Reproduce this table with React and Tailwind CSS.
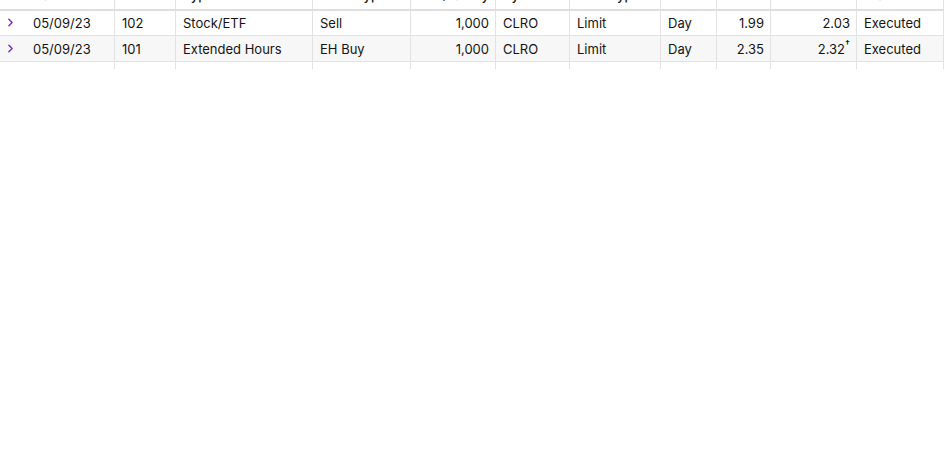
import { ChevronRight } from 'lucide-react';

const cols = 'grid grid-cols-[26px_89px_61px_137px_98px_85px_74px_91px_56px_54px_86px_87px]';

const headers = [
  { label: '', align: 'left' },
  { label: 'Date', align: 'left' },
  { label: 'Order', align: 'left' },
  { label: 'Type', align: 'left' },
  { label: 'Order type', align: 'left' },
  { label: 'Quantity', align: 'right' },
  { label: 'Symbol', align: 'left' },
  { label: 'Price type', align: 'left' },
  { label: 'Term', align: 'left' },
  { label: 'Price', align: 'right' },
  { label: 'Executed', align: 'right' },
  { label: 'Status', align: 'left' },
];

const orders = [
  { date: '05/09/23', order: '102', type: 'Stock/ETF', orderType: 'Sell', qty: '1,000', symbol: 'CLRO', priceType: 'Limit', term: 'Day', price: '1.99', executed: '2.03', dagger: false, status: 'Executed' },
  { date: '05/09/23', order: '101', type: 'Extended Hours', orderType: 'EH Buy', qty: '1,000', symbol: 'CLRO', priceType: 'Limit', term: 'Day', price: '2.35', executed: '2.32', dagger: true, status: 'Executed' },
];

function Cell({ children, right, first, className = '' }) {
  return (
    <div
      className={`flex items-center overflow-hidden whitespace-nowrap pt-[2px] ${first ? 'pl-[4px]' : 'border-r border-[#e2e2e2]'} ${right ? 'justify-end pr-[6px] pl-2' : first ? '' : 'pl-[7px] pr-1'} ${className}`}
    >
      {children}
    </div>
  );
}

export default function App() {
  return (
    <div className="w-[944px] h-[460px] overflow-hidden bg-white text-[13px] text-[#141414] font-['Inter','Liberation_Sans',sans-serif]">
      {/* header, scrolled mostly out of view */}
      <div className={`${cols} h-[30px] -mt-[19px] border-b-2 border-[#dedede] font-medium`}>
        {headers.map((h, i) => (
          <Cell key={i} first={i === 0} right={h.align === 'right'} className={i === 1 ? 'pl-[7px]' : ''}>
            {h.label}
          </Cell>
        ))}
      </div>

      {orders.map((o, idx) => (
        <div
          key={o.order}
          className={`${cols} ${idx === 0 ? 'h-[25px] bg-white' : 'h-[26px] bg-[#f7f7f7]'} border-b border-[#e2e2e2]`}
        >
          <Cell first>
            <ChevronRight className="h-[13px] w-[13px] -mt-[3px] text-[#7a22c4]" strokeWidth={2.5} />
          </Cell>
          <Cell className="pl-[7px]">{o.date}</Cell>
          <Cell>{o.order}</Cell>
          <Cell>{o.type}</Cell>
          <Cell>{o.orderType}</Cell>
          <Cell right>{o.qty}</Cell>
          <Cell>{o.symbol}</Cell>
          <Cell>{o.priceType}</Cell>
          <Cell>{o.term}</Cell>
          <Cell right>{o.price}</Cell>
          <Cell right>
            {o.executed}
            {o.dagger && <sup className="text-[9px] font-semibold -mt-[3px]">†</sup>}
          </Cell>
          <Cell>{o.status}</Cell>
        </div>
      ))}

      {/* partially visible empty row */}
      <div className={`${cols} h-[7px]`}>
        {headers.map((_, i) => (
          <Cell key={i} first={i === 0} />
        ))}
      </div>
    </div>
  );
}
